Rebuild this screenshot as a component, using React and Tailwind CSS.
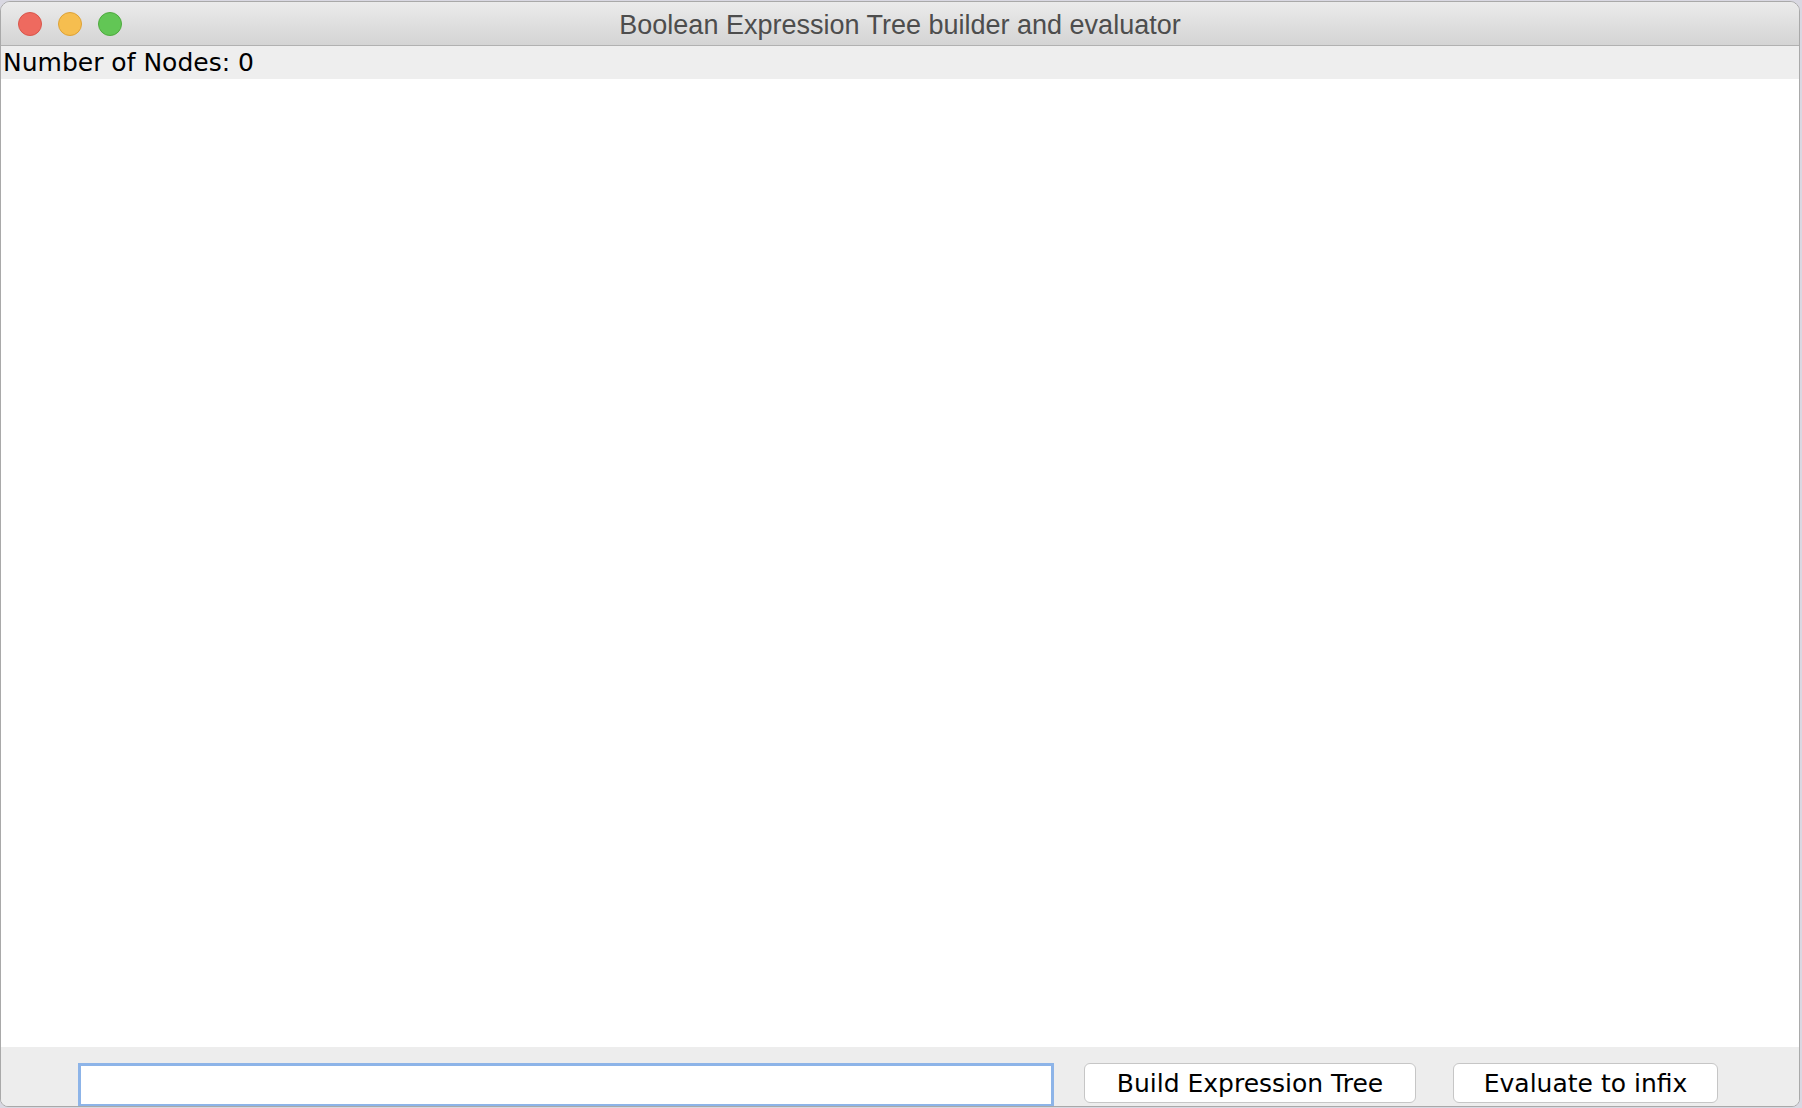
import React from "react";

export default function App() {
  return (
    <div className="w-[1802px] h-[1108px] bg-[#d9d8e2] flex flex-col overflow-hidden">
      <div className="w-[1800px] h-[1106px] mt-[1px] flex flex-col rounded-t-[10px] rounded-b-[8px] border border-[#a9a9a9] bg-[#ededed] overflow-hidden">
        {/* Title bar */}
        <div className="relative h-[44px] shrink-0 flex items-center justify-center pt-[3px] bg-gradient-to-b from-[#ebebeb] to-[#d4d4d4] border-b border-[#b1b1b1]">
          <div className="absolute left-[17px] top-[10px] flex gap-[16px]">
            <div className="w-[24px] h-[24px] rounded-full bg-[#ee6a5f] border border-[#d9564b]" />
            <div className="w-[24px] h-[24px] rounded-full bg-[#f6be4f] border border-[#dea236]" />
            <div className="w-[24px] h-[24px] rounded-full bg-[#62c655] border border-[#4eaa3e]" />
          </div>
          <span className="text-[27px] text-[#4d4d4d] leading-none" style={{ fontFamily: '"Liberation Sans", Arial, sans-serif' }}>
            Boolean Expression Tree builder and evaluator
          </span>
        </div>
        {/* Label */}
        <div className="h-[33px] shrink-0 bg-[#eeeeee] flex items-center pl-[2px]">
          <span className="text-[25px] text-black leading-none" style={{ fontFamily: '"DejaVu Sans", sans-serif' }}>
            Number of Nodes: 0
          </span>
        </div>
        {/* Canvas */}
        <div className="flex-1 bg-white" />
        {/* Bottom panel */}
        <div className="h-[59px] shrink-0 bg-[#ededed] flex items-start pt-[16px]">
          <div className="ml-[77px] w-[976px] h-[44px] border-[3px] border-[#8db4e8] bg-white" />
          <button className="ml-[30px] w-[332px] h-[40px] rounded-[6px] border border-[#c6c6c6] bg-white flex items-center justify-center text-[25px] text-black leading-none" style={{ fontFamily: '"DejaVu Sans", sans-serif' }}>
            Build Expression Tree
          </button>
          <button className="ml-[37px] w-[265px] h-[40px] rounded-[6px] border border-[#c6c6c6] bg-white flex items-center justify-center text-[25px] text-black leading-none" style={{ fontFamily: '"DejaVu Sans", sans-serif' }}>
            Evaluate to infix
          </button>
        </div>
      </div>
    </div>
  );
}
